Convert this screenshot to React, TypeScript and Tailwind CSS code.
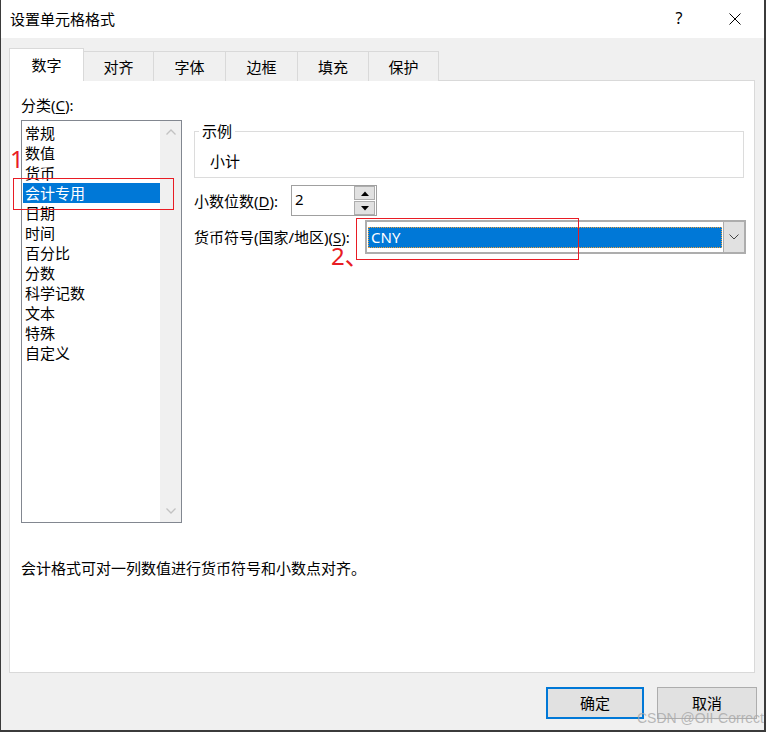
import React from "react";

const items = ["常规", "数值", "货币", "会计专用", "日期", "时间", "百分比", "分数", "科学记数", "文本", "特殊", "自定义"];

function Tab({ label, w, active }: { label: string; w: string; active?: boolean }) {
  return active ? (
    <div className={`${w} h-[33px] bg-white border border-b-0 border-[#d9d9d9] flex items-center justify-center pb-[1px]`}>
      {label}
    </div>
  ) : (
    <div className={`${w} h-[30px] bg-[#f0f0f0] border-t border-r border-[#d9d9d9] flex items-center justify-center pt-[1px]`}>
      {label}
    </div>
  );
}

export default function App() {
  return (
    <div className="relative w-[766px] h-[732px] bg-[#3b3b3b] text-[15px] text-black font-['Noto_Sans','Noto_Sans_CJK_SC',sans-serif] leading-[20px] overflow-hidden">
      <div className="ml-[1px] w-[763px] h-[730px] bg-[#f0f0f0] flex flex-col">
        {/* title bar */}
        <div className="h-[38px] bg-white flex items-center pl-[9px] shrink-0">
          <span className="flex-1 pb-[1px]">设置单元格格式</span>
          <span className="w-[20px] text-center text-[16px] mr-[40px] pb-[2px]">?</span>
          <svg width="12" height="12" viewBox="0 0 12 12" className="mr-[23px]">
            <path d="M0.5 0.5 L11.5 11.5 M11.5 0.5 L0.5 11.5" stroke="#000" strokeWidth="1" fill="none" />
          </svg>
        </div>

        {/* tabs */}
        <div className="mt-[10px] ml-[8px] flex items-end relative z-10 -mb-[1px]">
          <Tab label="数字" w="w-[75px]" active />
          <Tab label="对齐" w="w-[70px]" />
          <Tab label="字体" w="w-[72px]" />
          <Tab label="边框" w="w-[72px]" />
          <Tab label="填充" w="w-[71px]" />
          <Tab label="保护" w="w-[70px]" />
        </div>

        {/* panel */}
        <div className="ml-[8px] w-[746px] h-[593px] bg-white border border-[#d9d9d9] flex flex-col shrink-0">
          <div className="flex">
            {/* left column */}
            <div className="ml-[11px] mt-[14px] flex flex-col">
              <div>
                分类(<span className="underline underline-offset-2">C</span>):
              </div>
              <div className="mt-[5px] w-[161px] h-[403px] border border-[#828790] flex">
                <div className="flex-1 pt-[2px]">
                  {items.map((it) => (
                    <div
                      key={it}
                      className={
                        it === "会计专用"
                          ? "h-[20px] ml-[1px] pl-[2px] bg-[#0078d7] text-white"
                          : "h-[20px] ml-[1px] pl-[2px]"
                      }
                    >
                      {it}
                    </div>
                  ))}
                </div>
                <div className="w-[21px] bg-[#f0f0f0] flex flex-col items-center justify-between py-[8px]">
                  <svg width="10" height="6" viewBox="0 0 10 6">
                    <path d="M0.5 5.5 L5 1 L9.5 5.5" stroke="#c2c2c2" strokeWidth="1.3" fill="none" />
                  </svg>
                  <svg width="10" height="6" viewBox="0 0 10 6">
                    <path d="M0.5 0.5 L5 5 L9.5 0.5" stroke="#c2c2c2" strokeWidth="1.3" fill="none" />
                  </svg>
                </div>
              </div>
            </div>

            {/* right column */}
            <div className="ml-[12px] mt-[40px] flex flex-col">
              <fieldset className="w-[550px] h-[57px] border border-[#dcdcdc]">
                <legend className="ml-[4px] px-[3px] leading-[20px]">示例</legend>
                <div className="pl-[15px] pt-[10px]">小计</div>
              </fieldset>

              <div className="mt-[7px] flex items-center h-[31px]">
                <div className="w-[97px]">
                  小数位数(<span className="underline underline-offset-2">D</span>):
                </div>
                <div className="w-[86px] h-[31px] border border-[#a0a0a0] flex bg-white">
                  <div className="flex-1 pl-[3px] pt-[3px]">2</div>
                  <div className="w-[22px] flex flex-col gap-[1px] pr-[1px] pt-[0px]">
                    <div className="h-[14px] bg-[#e1e1e1] border border-[#adadad] flex items-center justify-center">
                      <svg width="8" height="5" viewBox="0 0 8 5"><path d="M0 5 L4 0.5 L8 5 Z" fill="#000" /></svg>
                    </div>
                    <div className="h-[14px] bg-[#e1e1e1] border border-[#adadad] flex items-center justify-center">
                      <svg width="8" height="5" viewBox="0 0 8 5"><path d="M0 0 L4 4.5 L8 0 Z" fill="#000" /></svg>
                    </div>
                  </div>
                </div>
              </div>

              <div className="mt-[4px] flex items-center h-[34px]">
                <div className="w-[171px]">
                  货币符号(国家/地区)(<span className="underline underline-offset-2">S</span>):
                </div>
                <div className="w-[381px] h-[34px] border-2 border-[#adadad] bg-white flex">
                  <div className="flex-1 flex items-center pl-[1px] pr-[1px]">
                    <div className="w-full h-[21px] bg-[#0078d7] border border-dotted border-[#e8a040] text-white pl-[2px] leading-[19px]">
                      CNY
                    </div>
                  </div>
                  <div className="w-[21px] bg-[#e1e1e1] border-l border-[#adadad] flex items-center justify-center">
                    <svg width="10" height="6" viewBox="0 0 10 6">
                      <path d="M0.5 0.5 L5 5 L9.5 0.5" stroke="#444" strokeWidth="1" fill="none" />
                    </svg>
                  </div>
                </div>
              </div>
            </div>
          </div>

          <div className="ml-[11px] mt-[35px]">会计格式可对一列数值进行货币符号和小数点对齐。</div>
        </div>

        {/* buttons */}
        <div className="mt-[14px] flex justify-end gap-[13px] pr-[7px]">
          <div className="w-[98px] h-[32px] bg-[#e1e1e1] border-2 border-[#0078d7] flex items-center justify-center">确定</div>
          <div className="w-[100px] h-[32px] bg-[#e1e1e1] border border-[#adadad] flex items-center justify-center">取消</div>
        </div>
      </div>

      {/* annotations */}
      <div className="absolute left-[13px] top-[178px] w-[161px] h-[32px] border border-[#e81c24]" />
      <div className="absolute left-[10px] top-[144px] text-[#e81c24] text-[24px] leading-[30px] font-['Noto_Sans',sans-serif]">1</div>
      <div className="absolute left-[356px] top-[218px] w-[223px] h-[42px] border border-[#e81c24]" />
      <div className="absolute left-[331px] top-[241px] text-[#e81c24] text-[24px] leading-[30px] font-['Noto_Sans','Noto_Sans_CJK_SC',sans-serif]">2、</div>
      <div className="absolute left-[637px] top-[709px] text-[14px] leading-[18px] text-[#a8a8a8]/80 font-['Liberation_Sans',sans-serif]">CSDN @OII-Correct</div>
    </div>
  );
}
